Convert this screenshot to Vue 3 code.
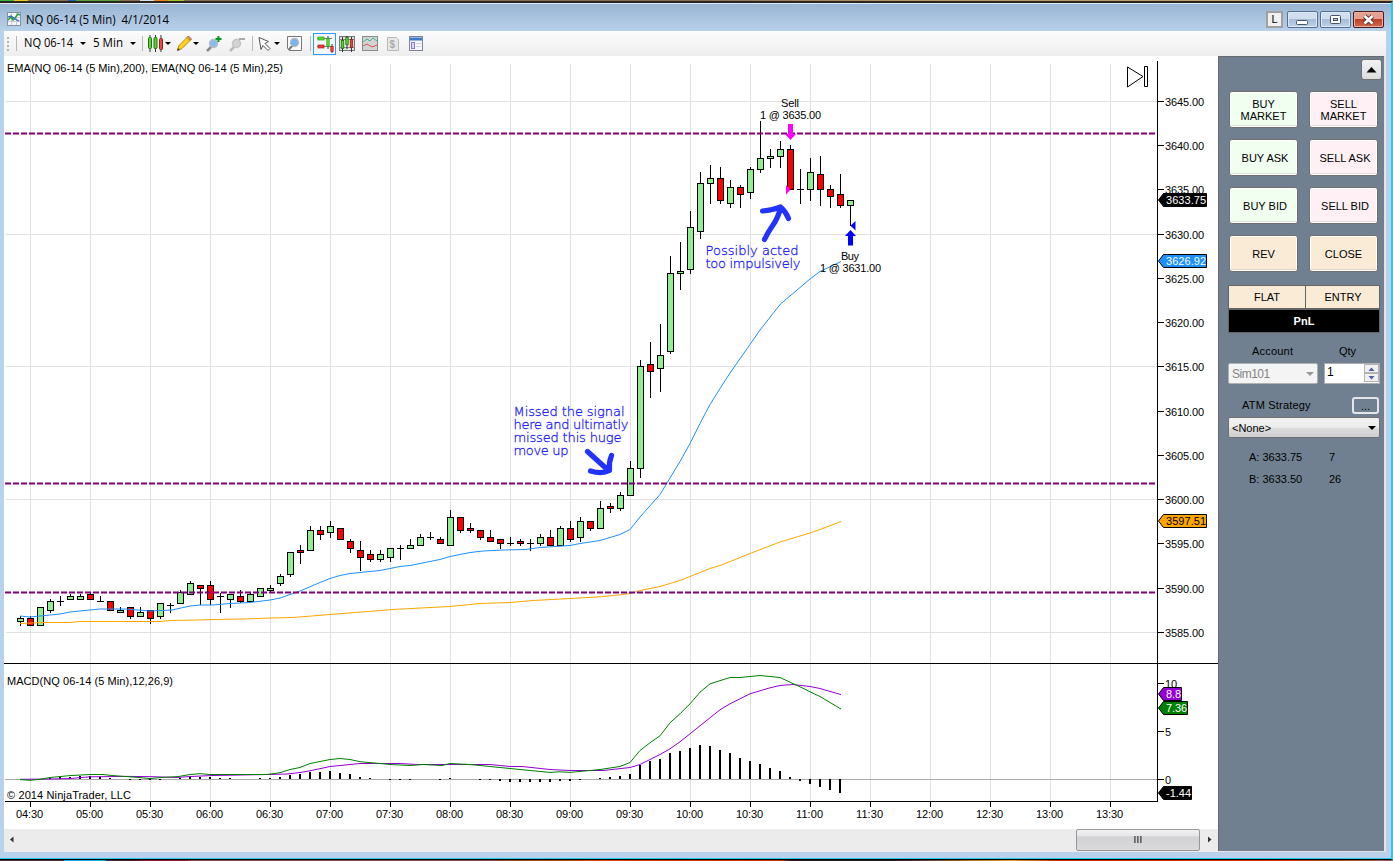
<script setup>
import { ref } from 'vue'

const account = ref('Sim101')
const strategy = ref('<None>')
const qty = ref(1)

// One entry per 5 minute bar: high, body top, body bottom, low, direction
// g = up, r = down, d = doji
const bars = [
  [616, 618, 622, 626, 'g'], [616, 618, 626, 626, 'r'], [607, 607, 626, 626, 'g'],
  [599, 601, 611, 613, 'g'], [596, 601, 602, 606, 'd'], [594, 596, 600, 600, 'g'],
  [594, 596, 600, 600, 'g'], [592, 594, 600, 600, 'r'], [596, 601, 602, 602, 'd'],
  [601, 601, 611, 611, 'r'], [607, 610, 613, 613, 'g'], [607, 607, 617, 619, 'r'],
  [607, 612, 617, 617, 'g'], [610, 610, 619, 624, 'r'], [603, 603, 617, 619, 'g'],
  [603, 605, 606, 613, 'd'], [590, 592, 604, 604, 'g'], [581, 583, 595, 595, 'g'],
  [585, 585, 589, 605, 'r'], [581, 585, 600, 605, 'r'], [593, 596, 597, 613, 'd'],
  [594, 594, 600, 608, 'g'], [590, 596, 602, 603, 'r'], [592, 594, 602, 602, 'g'],
  [588, 588, 597, 597, 'g'], [585, 588, 591, 593, 'g'], [574, 576, 584, 586, 'g'],
  [552, 552, 575, 577, 'g'], [545, 550, 553, 564, 'r'], [526, 530, 551, 551, 'g'],
  [526, 530, 535, 540, 'r'], [521, 526, 533, 538, 'g'], [528, 528, 540, 540, 'r'],
  [539, 541, 549, 553, 'r'], [541, 550, 558, 571, 'r'], [550, 554, 560, 562, 'r'],
  [550, 554, 560, 562, 'g'], [548, 548, 558, 562, 'g'], [545, 548, 549, 560, 'd'],
  [539, 545, 549, 549, 'g'], [534, 537, 546, 546, 'g'], [532, 537, 538, 540, 'd'],
  [537, 539, 544, 544, 'r'], [510, 517, 546, 546, 'g'], [517, 517, 531, 533, 'r'],
  [523, 528, 531, 533, 'r'], [530, 530, 538, 540, 'r'], [530, 537, 542, 542, 'r'],
  [539, 539, 544, 549, 'r'], [537, 543, 544, 546, 'd'], [539, 541, 544, 546, 'r'],
  [539, 543, 544, 551, 'd'], [534, 537, 544, 546, 'g'], [530, 537, 546, 546, 'r'],
  [526, 528, 546, 546, 'g'], [521, 528, 540, 542, 'r'], [517, 521, 538, 542, 'g'],
  [521, 521, 529, 531, 'r'], [501, 508, 529, 529, 'g'], [503, 506, 509, 513, 'r'],
  [492, 495, 509, 511, 'g'], [461, 468, 496, 496, 'g'], [360, 366, 469, 478, 'g'],
  [342, 364, 372, 398, 'r'], [324, 355, 369, 392, 'g'], [256, 273, 352, 354, 'g'],
  [242, 271, 274, 290, 'g'], [211, 227, 270, 274, 'g'], [172, 183, 232, 239, 'g'],
  [165, 178, 184, 204, 'g'], [167, 178, 201, 204, 'r'], [180, 187, 204, 208, 'g'],
  [185, 187, 195, 208, 'r'], [167, 169, 193, 199, 'g'], [121, 158, 170, 173, 'g'],
  [149, 156, 159, 168, 'g'], [141, 149, 157, 168, 'g'], [145, 149, 190, 190, 'r'],
  [169, 189, 190, 204, 'd'], [158, 172, 190, 201, 'g'], [156, 174, 190, 206, 'r'],
  [185, 189, 197, 208, 'r'], [174, 194, 206, 208, 'r'], [200, 200, 206, 226, 'g']
]

// MACD histogram heights, same bar index as above
const histogram = [
  0, 0, 0, 1, 2, 2, 3, 3, 2, 1, 0, -1, -1, -1, -1, 0, 1, 2, 2, 2, 1, 1, 0, 0, 1, 1, 2, 4,
  5, 7, 7, 8, 6, 5, 2, 1, 0, -1, -1, -1, 0, 0, -1, 1, 0, 0, -1, -1, -2, -3, -3, -3, -3,
  -3, -2, -2, -1, 0, 1, 2, 3, 5, 14, 18, 20, 26, 28, 31, 34, 33, 29, 26, 21, 18, 15, 11,
  8, 2, -2, -5, -8, -11, -14
]

const barX = (i) => 20 + i * 10

const times = ['04:30', '05:00', '05:30', '06:00', '06:30', '07:00', '07:30', '08:00', '08:30', '09:00',
  '09:30', '10:00', '10:30', '11:00', '11:30', '12:00', '12:30', '13:00', '13:30']
const timeX = (i) => 30 + i * 60

const prices = Array.from({ length: 13 }, (_, i) => ({
  label: (3645 - i * 5).toFixed(2),
  y: Math.round(100.9 + i * 44.25),
  grid: i % 3 === 0
}))

const macdTicks = [
  { label: '10', y: 683 },
  { label: '5', y: 731 },
  { label: '0', y: 779 }
]

const levels = [133.5, 483.5, 592.5]

const tags = [
  { label: '3633.75', y: 193, right: 1207, color: '#000000' },
  { label: '3626.92', y: 254, right: 1207, color: '#1e90ff' },
  { label: '3597.51', y: 514, right: 1207, color: '#ffa500', dark: true },
  { label: '8.8', y: 687, right: 1182, color: '#9400d3' },
  { label: '7.36', y: 701, right: 1188, color: '#008000' },
  { label: '-1.44', y: 786, right: 1192, color: '#000000' }
]

const tagPath = (t) =>
  `M${t.right - 0.5} ${t.y + 0.5}H1163.5L1158.5 ${t.y + 7}L1163.5 ${t.y + 13.5}H${t.right - 0.5}Z`

const ema25 = '20,616 30,617 40,616 60,614 70,612 90,610 100,609 125,609 150,611 172,610 190,606 200,605 213,605 230,603.5 250,602.5 270,600 280,598 300,591 320,582.5 330,578.5 340,575.5 350,573.5 380,570.5 390,568.5 400,566.5 410,565.5 440,559.5 450,556.5 470,552.5 483,551 503,550 525,549.5 540,547.5 570,545.5 580,543.5 600,540.5 620,534.5 630,529.5 640,517 660,494.5 680,461.5 690,443.5 700,423.5 710,404.5 720,388.5 730,373 750,344.5 760,330 780.5,304 800,287.5 810,279 820,271.5 841,261.5'
const ema200 = '20,623.5 43,622.5 70,622.5 80,621.5 160,621.5 170,620.5 197,620 213,619.5 243,619 270,618 293,617.5 330,614.5 393,609.5 430,607.5 450,606.5 480,603.5 510,602.5 533,600.5 570,598.5 600,596.8 620,594.8 630,593.5 640,590.5 660,586.5 680,580.5 690,576.5 710,568.5 720,565.5 750,553.5 780,542 810,533 820,529.5 841,521.5'
const macd = '20,779.6 30,780.3 40,779.3 50,777.5 70,775.6 90,774.5 103,774.5 113,775.6 127,776.6 140,777.6 150,778.6 160,777.6 178,776.6 190,774.5 200,773.7 210,774.5 267,774.5 280,772.7 290,769.5 300,767.5 310,763.5 330,759.5 340,758.5 350,759.5 360,761.7 380,763.5 390,764.5 410,765.5 423,764.5 442,765.5 450,763.5 470,764.5 490,766.5 510,768.5 530,770.5 550,772.4 560,771.8 570,772.4 590,770.5 600,769.5 620,766.5 630,762.5 640,750.5 650,742.8 660,735.8 670,722.8 680,713.8 690,703.8 700,692.2 710,683.8 730,677.5 740,677.5 750,676.5 760,675.5 780,677.5 800,686.8 810,691.8 820,696.5 841,709'
const signal = '20,779.3 50,779 70,778.5 90,776.8 127,776.4 153,776.7 177,777.5 190,776.5 213,775.5 267,774.5 287,774 300,772.5 310,770.8 330,766.5 360,763.5 400,763.5 417,764.5 490,764.5 510,766.5 522,766.5 550,769.5 570,770.5 603,770.5 630,767.5 640,764.5 660,754.5 670,748.8 680,741.8 720,709.8 730,703.8 750,693.8 770,687.8 780,685.5 793,684.5 810,686.5 820,688.5 841,694.6'

const orders = [
  { label: 'BUY MARKET', kind: 'buy' },
  { label: 'SELL MARKET', kind: 'sell' },
  { label: 'BUY ASK', kind: 'buy' },
  { label: 'SELL ASK', kind: 'sell' },
  { label: 'BUY BID', kind: 'buy' },
  { label: 'SELL BID', kind: 'sell' },
  { label: 'REV', kind: 'exit' },
  { label: 'CLOSE', kind: 'exit' }
]
</script>

<template>
  <div class="desktop">
    <div class="window">
      <!-- Title bar -->
      <header class="titlebar">
        <svg class="app-icon" width="14" height="14" viewBox="0 0 14 14">
          <rect x=".5" y=".5" width="13" height="13" fill="#f4f6fb" stroke="#8890a8" />
          <path d="M4.5 1v12M9.5 1v12M1 5.5h12M1 9.5h12" stroke="#c4c8dc" />
          <path d="M1 8l3-3 2 3 2-2 3-4 2 1" fill="none" stroke="#2aa03a" stroke-width="1.5" />
          <path d="M1 5l3-1 4 3 4 2" fill="none" stroke="#2c62c8" stroke-width="1.3" />
        </svg>
        <svg class="title" width="150" height="20">
          <text x="0" y="14" textLength="143" lengthAdjust="spacingAndGlyphs">NQ 06-14 (5 Min)&nbsp; 4/1/2014</text>
        </svg>
        <div class="link-box">L</div>
        <button class="win-btn">
          <svg width="28" height="15"><rect x="8.500" y="8.500" width="11" height="4" rx="1" fill="#fff" stroke="#4a5468" /></svg>
        </button>
        <button class="win-btn">
          <svg width="28" height="15">
            <rect x="9.500" y="3.500" width="10" height="8" rx="1" fill="#fff" stroke="#4a5468" />
            <rect x="12.500" y="6.500" width="4" height="2" fill="#b8cde6" stroke="#4a5468" />
          </svg>
        </button>
        <button class="win-btn close">
          <svg width="28" height="15">
            <path d="M10.500 4l8 7.500M18.500 4l-8 7.500" stroke="#5a3a3e" stroke-width="4.500" />
            <path d="M10.500 4l8 7.500M18.500 4l-8 7.500" stroke="#fff" stroke-width="2.500" />
          </svg>
        </button>
      </header>

      <!-- Toolbar -->
      <nav class="toolbar">
        <svg width="12" height="18"><path d="M4 2v16" stroke="#b4b4b4" stroke-width="2" stroke-dasharray="2 2" /></svg>
        <i class="sep"></i>
        <svg class="tool-text" width="53" height="18"><text x="0" y="12" textLength="49" lengthAdjust="spacingAndGlyphs">NQ 06-14</text></svg>
        <i class="caret"></i>
        <svg class="tool-text" width="34" height="18"><text x="0" y="12" textLength="30" lengthAdjust="spacingAndGlyphs">5 Min</text></svg>
        <i class="caret"></i>
        <i class="sep"></i>
        <svg width="18" height="18">
          <path d="M4 0v17M9.500 0v17M15 0v17" stroke="#333" />
          <rect x="2.500" y="2.500" width="3" height="11" rx="1" fill="#58dc28" stroke="#246a18" />
          <rect x="8" y="2.500" width="3" height="11" rx="1" fill="#58dc28" stroke="#246a18" />
          <rect x="13.500" y="3.500" width="3" height="11" rx="1" fill="#f04848" stroke="#8a2020" />
        </svg>
        <i class="caret"></i>
        <svg width="18" height="18">
          <path d="M2.500 15l1.500-4.500L13 1.500l3 3L7 13.500z" fill="#ffd21c" stroke="#b98a10" />
          <path d="M12 2.500l3 3 1.500-1.500-3-3z" fill="#e8926a" stroke="#9a6a3a" stroke-width=".8" />
          <path d="M2 16l1-3 2 2z" fill="#5a3a10" />
        </svg>
        <i class="caret"></i>
        <svg width="18" height="18">
          <path d="M7 11l-5 5" stroke="#888" stroke-width="2.500" />
          <circle cx="8.500" cy="8.500" r="4" fill="#86bdea" stroke="#b4bcc8" stroke-width="1.500" />
          <path d="M13.500 1v6M10.500 4h6" stroke="#0a9a20" stroke-width="2" />
        </svg>
        <svg width="18" height="18">
          <path d="M7 11l-5 5" stroke="#bbb" stroke-width="2.500" />
          <circle cx="8.500" cy="8.500" r="4" fill="#d4d4d4" stroke="#c4c4c4" stroke-width="1.500" />
          <path d="M11 4h6" stroke="#aaa" stroke-width="2" />
        </svg>
        <i class="sep"></i>
        <svg width="15" height="18"><path d="M2 2.500l9.500 4-3.500 2 5 5-2 2-5-5-2 4z" fill="#fff" stroke="#555" /></svg>
        <i class="caret"></i>
        <svg width="18" height="18">
          <path d="M1.500 1.500h14v14h-12l-2-2z" fill="#fafafa" stroke="#777" />
          <path d="M7 10l-4.500 5" stroke="#777" stroke-width="2" />
          <circle cx="8.500" cy="7.500" r="4" fill="#78b4e8" stroke="#b0b8c4" stroke-width="1.300" />
        </svg>
        <i class="sep"></i>
        <span class="pressed">
          <svg width="18" height="18">
            <path d="M1 3.500h15M1 11.500h15" stroke="#777" />
            <rect x="2" y="2" width="6" height="3" fill="#58dc28" stroke="#28a018" stroke-width=".7" />
            <rect x="2" y="10" width="6" height="3" fill="#f03838" stroke="#b02020" stroke-width=".7" />
            <path d="M12 1v13M16 9v9" stroke="#333" />
            <rect x="10.800" y="3.500" width="2.400" height="8" fill="#58dc28" stroke="#28a018" stroke-width=".7" />
            <rect x="14.800" y="11.500" width="2.400" height="5" fill="#f04848" stroke="#b02020" stroke-width=".7" />
          </svg>
        </span>
        <svg width="18" height="18">
          <rect x="1.500" y="1.500" width="15" height="14" fill="#e4e4e4" stroke="#777" />
          <path d="M1 4.500h16M1 12.500h16" stroke="#888" />
          <path d="M4.500 2v15M9 1v13M13.500 2v15" stroke="#333" />
          <rect x="3.300" y="5.500" width="2.400" height="8" fill="#58dc28" stroke="#1c7010" stroke-width=".8" />
          <rect x="7.800" y="2.500" width="2.400" height="7" fill="#58dc28" stroke="#1c7010" stroke-width=".8" />
          <rect x="12.300" y="4.500" width="2.400" height="8" fill="#f04040" stroke="#902020" stroke-width=".8" />
        </svg>
        <svg width="18" height="18">
          <rect x="1.500" y="1.500" width="15" height="14" fill="#d2d4d4" stroke="#8a8c8c" />
          <path d="M2 7l4-3 3 2 3-3 4 3" fill="none" stroke="#40b090" />
          <path d="M2 11l4-2 5 3 5-2" fill="none" stroke="#e05050" />
        </svg>
        <svg width="18" height="18">
          <path d="M3.500 2.500h9l2 2v11h-11z" fill="#e8e8e8" stroke="#b8b8b8" />
          <text class="dollar" x="5.500" y="13">$</text>
        </svg>
        <svg width="18" height="18">
          <rect x="2.500" y="1.500" width="13" height="14" fill="#f4f6fa" stroke="#7a8494" />
          <path d="M3 4h12" stroke="#3c78c8" stroke-width="3" />
          <rect x="4.500" y="7.500" width="3" height="6" fill="#dcd4fa" stroke="#8878d8" />
          <path d="M9 8.500h5M9 11.500h5" stroke="#d0d4da" />
        </svg>
      </nav>

      <div class="content">
        <div class="chart-col">
          <!-- Price and MACD panes -->
          <svg class="chart" width="1214" height="773" viewBox="4 56 1214 773">
            <g class="grid">
              <path v-for="(t, i) in times" :key="t" :d="`M${timeX(i) + 0.5} 64V801`" />
              <template v-for="p in prices" :key="p.label">
                <path v-if="p.grid" :d="`M6 ${p.y + 0.5}H1157`" />
              </template>
            </g>

            <text x="7" y="72" textLength="276">EMA(NQ 06-14 (5 Min),200), EMA(NQ 06-14 (5 Min),25)</text>
            <text x="7" y="685" textLength="166">MACD(NQ 06-14 (5 Min),12,26,9)</text>
            <text x="7" y="799" textLength="124">© 2014 NinjaTrader, LLC</text>

            <g shape-rendering="crispEdges">
              <g v-for="(b, i) in bars" :key="i">
                <rect :x="barX(i)" :y="b[0]" width="1" :height="b[3] - b[0]" />
                <rect :x="barX(i) - 3" :y="b[1]" width="7" :height="b[2] - b[1]" />
                <rect
                  v-if="b[4] !== 'd'"
                  :class="b[4] === 'g' ? 'up' : 'down'"
                  :x="barX(i) - 2"
                  :y="b[1] + 1"
                  width="5"
                  :height="b[2] - b[1] - 2"
                />
              </g>
            </g>

            <polyline class="line" :points="ema200" stroke="#ffa500" />
            <polyline class="line" :points="ema25" stroke="#1e90ff" />

            <path v-for="y in levels" :key="y" class="level" :d="`M5 ${y}H1157`" />

            <!-- MACD -->
            <path d="M5 779.5H1157" stroke="#a9a9a9" />
            <g shape-rendering="crispEdges">
              <rect
                v-for="(h, i) in histogram"
                :key="i"
                :x="barX(i) - 1"
                :y="h > 0 ? 779 - h : 779"
                width="2"
                :height="Math.abs(h)"
              />
            </g>
            <polyline class="line" :points="signal" stroke="#9400d3" />
            <polyline class="line" :points="macd" stroke="#008000" />

            <!-- Axes -->
            <path class="axis" d="M1157.500 61V802M5 801.500H1158M4 663.500H1218" />
            <g v-for="(t, i) in times" :key="'t' + t">
              <path class="axis" :d="`M${timeX(i) + 0.5} 802V807`" />
              <text :x="timeX(i) - 14" y="818" textLength="27">{{ t }}</text>
            </g>
            <g v-for="p in prices" :key="'p' + p.label">
              <path class="axis" :d="`M1158 ${p.y + 0.5}H1164`" />
              <text x="1165" :y="p.y + 5" textLength="39">{{ p.label }}</text>
            </g>
            <g v-for="m in macdTicks" :key="m.label">
              <path class="axis" :d="`M1158 ${m.y + 0.5}H1164`" />
              <text x="1165" :y="m.y + 5">{{ m.label }}</text>
            </g>
            <g v-for="t in tags" :key="t.label">
              <path :d="tagPath(t)" :fill="t.color" stroke="#000" />
              <text x="1166" :y="t.y + 11" :class="{ light: !t.dark }" :textLength="t.right - 1167">{{ t.label }}</text>
            </g>

            <!-- Jump to last bar -->
            <path d="M1127.500 67V87L1143 76.500ZM1144.500 66.500h3v20h-3z" fill="#fff" stroke="#000" />

            <!-- Executions -->
            <path d="M788 124h5v10h3l-5.500 6-5.500-6h3zM786 185v9.500l4.500-4.700z" fill="#ff00ff" />
            <path d="M850.500 230l5.500 6h-3v9.500h-5V236h-3zM855.500 221v9.500l-5-4.700z" fill="#0000ff" />
            <text x="781" y="107" textLength="18">Sell</text>
            <text x="760" y="119" textLength="61">1 @ 3635.00</text>
            <text x="841" y="260" textLength="18">Buy</text>
            <text x="820" y="272" textLength="61">1 @ 3631.00</text>

            <!-- Trader's notes -->
            <g class="note">
              <text x="513.500" y="416" textLength="111">Missed the signal</text>
              <text x="513.500" y="429" textLength="115">here and ultimatly</text>
              <text x="513.500" y="442" textLength="108">missed this huge</text>
              <text x="513.500" y="455" textLength="55">move up</text>
              <text x="705.500" y="255" textLength="93">Possibly acted</text>
              <text x="705.500" y="268" textLength="95">too impulsively</text>
            </g>
            <g class="pen">
              <path d="M587.500 451.500L608.500 470.500M611.500 455.500Q608.500 463 609.500 470.500Q602 474.500 590.500 471" />
              <path d="M764.500 239.500Q768 232 773 225T780.500 208M762.500 211Q773 210 780.500 207Q786 212 788.500 218.500" />
            </g>
          </svg>

          <div class="scrollbar">
            <svg width="17" height="23"><path d="M9.500 7.500v6l-3.500-3z" fill="#333" /></svg>
            <div class="track"><div class="thumb"><i></i><i></i><i></i></div></div>
            <svg width="18" height="23"><path d="M8 7.500v6l3.500-3z" fill="#333" /></svg>
          </div>
        </div>

        <!-- Chart trader -->
        <aside class="trader">
          <button class="collapse"><svg width="11" height="6"><path d="M.500 5.500L5.500 0l5 5.500z" /></svg></button>
          <div class="orders">
            <button v-for="o in orders" :key="o.label" :class="['order', o.kind]">{{ o.label }}</button>
          </div>
          <div class="position">
            <span>FLAT</span>
            <span>ENTRY</span>
          </div>
          <div class="pnl">PnL</div>
          <div class="row labels">
            <span class="account-label">Account</span>
            <span class="qty-label">Qty</span>
          </div>
          <div class="row">
            <div class="select disabled">{{ account }}<i class="caret"></i></div>
            <div class="qty">
              <span>{{ qty }}</span>
              <div class="spin">
                <b><svg width="7" height="4"><path d="M.500 4l3-3.500 3 3.500z" fill="#4a5fa8" /></svg></b>
                <b><svg width="7" height="4"><path d="M.500 0l3 3.500 3-3.500z" fill="#4a5fa8" /></svg></b>
              </div>
            </div>
          </div>
          <div class="row atm">
            <span>ATM Strategy</span>
            <button class="more">...</button>
          </div>
          <div class="select strategy">{{ strategy }}<i class="caret"></i></div>
          <div class="quotes">
            <span>A: 3633.75</span><span>7</span>
            <span>B: 3633.50</span><span>26</span>
          </div>
        </aside>
      </div>
    </div>
  </div>
</template>

<style>
body {
  margin: 0;
  overflow: hidden;
}
</style>

<style scoped>
.desktop {
  box-sizing: border-box;
  width: 1393px;
  height: 861px;
  padding-top: 1px;
  /* slivers of wallpaper above and below the window */
  background:
    linear-gradient(90deg, #3cb43c 0 14px, #f0c818 14px 28px, #8a7050 28px 68px, #2060b0 68px 76px, #58a040 76px 120px, #8a7050 120px 140px, #d8e0e8 140px 154px, #f08018 154px 168px, #a0c828 168px 184px, #8a7058 184px 700px, #b89868 900px, #c8a878) 0 0 / 100% 2px no-repeat,
    linear-gradient(90deg, #4a3428 64px, #10a8e0 64px 106px, #402820 106px 140px, #a01818 140px 188px, #7a5038 188px 480px, #d84818 600px, #c83010 780px, #301828 790px 890px, #d8a030 1010px, #c82810 1060px, #d83818 1280px, #8a6a50);
  font: 11px "Liberation Sans", Arial, sans-serif;
  color: #000;
}
.window {
  box-sizing: border-box;
  height: 859px;
  padding: 0 5px 5px 4px;
  border-top: 2px solid #2a2520;
  border-right: 2px solid #2cc8e8;
  border-bottom: 1px solid #000;
  box-shadow: inset 0 -1px #2cc8e8, inset 0 1px #dfeaf6;
  background: linear-gradient(#98b4d2, #b9d1ea 28px, #b9d1ea);
}
button {
  box-sizing: border-box;
  padding: 0;
  font: inherit;
  color: inherit;
}

/* title bar */
.titlebar {
  display: flex;
  box-sizing: border-box;
  height: 28px;
  padding: 0 2px 0 3px;
}
.app-icon {
  margin-top: 9px;
}
.title {
  margin: 7px auto 0 5px;
}
.title text,
.tool-text text {
  font: 12px "Open Sans", "Noto Sans", sans-serif;
}
.link-box {
  box-sizing: border-box;
  width: 17px;
  height: 17px;
  margin: 8px 4px 0 0;
  border: 2px solid #a0a0a0;
  background: #f0f0f0;
  line-height: 13px;
  text-align: center;
}
.win-btn {
  width: 31px;
  height: 17px;
  margin: 8px 2px 0 0;
  border: 1px solid #56708e;
  border-radius: 2px;
  background: linear-gradient(#cfdff0 45%, #a5bdd8 50%, #bed3ea);
  box-shadow: inset 0 0 0 1px #dce8f4;
}
.win-btn svg {
  display: block;
}
.win-btn.close {
  margin-right: 0;
  border-color: #4a1a20;
  background: linear-gradient(#e6a090 45%, #c04028 50%, #cf6a4c);
  box-shadow: inset 0 0 0 1px #e8b0a4;
}

/* toolbar */
.toolbar {
  display: grid;
  grid-template-columns: 12px 8px 56px 13px 37px 12px 4px 19px 10px 18px 12px 23px 24px 5px 17px 12px 24px 3px 25px 23px 23px 23px 18px;
  align-items: center;
  height: 25px;
  background: linear-gradient(#fcfcfc, #eeeeee);
}
.toolbar svg {
  display: block;
}
.sep {
  width: 1px;
  height: 15px;
  background: #b8b8b8;
}
.caret {
  width: 0;
  height: 0;
  border: 3px solid transparent;
  border-top-color: #000;
  border-bottom: 0;
}
.pressed {
  box-sizing: border-box;
  width: 23px;
  height: 22px;
  padding: 1px 2px;
  border: 1px solid #3399ff;
  background: #f4f8fc;
}
.dollar {
  font-size: 10px;
  font-weight: bold;
  fill: #aaa;
}

/* chart */
.content {
  display: flex;
  height: 796px;
}
.chart-col {
  width: 1214px;
  background: #fff;
}
.chart {
  display: block;
}
.grid path {
  stroke: #e0e0e0;
}
.up {
  fill: #90ee90;
}
.down {
  fill: #ff0000;
}
.line {
  fill: none;
}
.level {
  stroke: #800080;
  stroke-width: 2;
  stroke-dasharray: 6 2;
}
.axis {
  stroke: #000;
}
.light {
  fill: #fff;
}
.note text {
  font: 13px "DejaVu Sans", Verdana, sans-serif;
  font-weight: 200;
  fill: #2222ff;
  stroke: #2222ff;
  stroke-width: 0.3;
}
.pen path {
  fill: none;
  stroke: #2233ff;
  stroke-width: 5.2;
  stroke-linecap: round;
  stroke-linejoin: round;
}
.scrollbar {
  display: flex;
  height: 23px;
  background: #ececec;
}
.track {
  display: flex;
  flex: 1;
  justify-content: flex-end;
}
.thumb {
  display: flex;
  box-sizing: border-box;
  align-items: center;
  justify-content: center;
  gap: 1px;
  width: 124px;
  height: 22px;
  border: 1px solid #979797;
  border-radius: 2px;
  background: linear-gradient(#f2f2f2, #e6e6e8 30%, #d2d2d6 34%, #dadadc);
}
.thumb i {
  width: 2px;
  height: 7px;
  margin-top: -2px;
  background: linear-gradient(90deg, #555, #999);
}

/* chart trader panel */
.trader {
  display: flex;
  flex-direction: column;
  box-sizing: border-box;
  width: 168px;
  padding: 2px 3px 0 10px;
  border: 1px solid #e3e3e3;
  border-width: 0 2px 1px 0;
  box-shadow: inset 1px 1px #696969;
  background: #708090;
}
.collapse {
  display: flex;
  align-self: flex-end;
  align-items: center;
  justify-content: center;
  width: 21px;
  height: 21px;
  margin: 1px -1px 0 0;
  border: 1px solid #707070;
  border-radius: 3px;
  background: linear-gradient(#f2f2f2, #ddd);
}
.orders {
  display: grid;
  grid-template-columns: 69px 69px;
  gap: 11px;
  margin: 11px 0 0 1px;
}
.order {
  height: 37px;
  padding: 0 8px;
  border: 1px solid #707070;
  border-radius: 3px;
  line-height: 12px;
}
.buy {
  background: #f0fff0;
  box-shadow: inset 0 0 0 1px #fff, inset 0 -2px #d8e4d8;
}
.sell {
  background: #fff0f5;
  box-shadow: inset 0 0 0 1px #fff, inset 0 -2px #e4d8dc;
}
.exit {
  background: #faebd7;
  box-shadow: inset 0 0 0 1px #fff, inset 0 -2px #e0d4c4;
}
.order:nth-child(n + 3) {
  padding: 0;
}
.buy:nth-child(n + 3),
.sell:nth-child(n + 3) {
  padding-left: 3px;
}
.position {
  display: grid;
  grid-template-columns: 76px 75px;
  box-sizing: border-box;
  width: 152px;
  height: 24px;
  margin-top: 13px;
  border: 1px solid #646464;
  background: #faebd7;
  line-height: 23px;
  text-align: center;
}
.position span + span {
  border-left: 1px solid #646464;
}
.pnl {
  box-sizing: border-box;
  width: 152px;
  height: 24px;
  border: 1px solid #646464;
  background: #000;
  color: #fff;
  font-weight: bold;
  line-height: 23px;
  text-align: center;
}
.row {
  display: flex;
  width: 152px;
}
.labels {
  height: 15px;
  margin: 11px 0 4px;
  line-height: 15px;
}
.account-label {
  width: 87px;
  padding-left: 24px;
  box-sizing: border-box;
  letter-spacing: 0.2px;
}
.qty-label {
  padding-left: 24px;
}
.select {
  display: flex;
  box-sizing: border-box;
  align-items: center;
  justify-content: space-between;
  height: 21px;
  padding: 0 3px;
  border: 1px solid #707070;
  border-radius: 2px;
  background: linear-gradient(#f2f2f2, #ebebeb 50%, #dddddd 50%, #cfcfcf);
}
.select .caret {
  border-width: 4px 4px 0;
}
.disabled {
  width: 90px;
  margin-right: 6px;
  border-color: #adb2b5;
  background: #f4f4f4;
  color: #838383;
  font-size: 12px;
  letter-spacing: -0.5px;
}
.disabled .caret {
  border-top-color: #999;
}
.qty {
  display: flex;
  box-sizing: border-box;
  justify-content: space-between;
  width: 56px;
  height: 21px;
  padding-left: 2px;
  border: 1px solid #abadb3;
  background: #fff;
  font-size: 12px;
  line-height: 17px;
}
.spin {
  width: 15px;
}
.spin b {
  display: flex;
  box-sizing: border-box;
  align-items: center;
  justify-content: center;
  height: 9px;
  border: 1px solid #b4b4b4;
  background: #f0f0f0;
}
.atm {
  justify-content: space-between;
  box-sizing: border-box;
  height: 19px;
  margin: 12px 0 2px;
  padding: 0 1px 0 14px;
  line-height: 19px;
  letter-spacing: 0.2px;
}
.more {
  width: 27px;
  height: 17px;
  margin-top: 1px;
  border: 2px solid #e4e6ea;
  border-radius: 3px;
  background: #708090;
  line-height: 10px;
}
.strategy {
  width: 152px;
}
.quotes {
  display: grid;
  grid-template-columns: 80px 40px;
  margin: 8px 0 0 21px;
  line-height: 22px;
}
</style>
